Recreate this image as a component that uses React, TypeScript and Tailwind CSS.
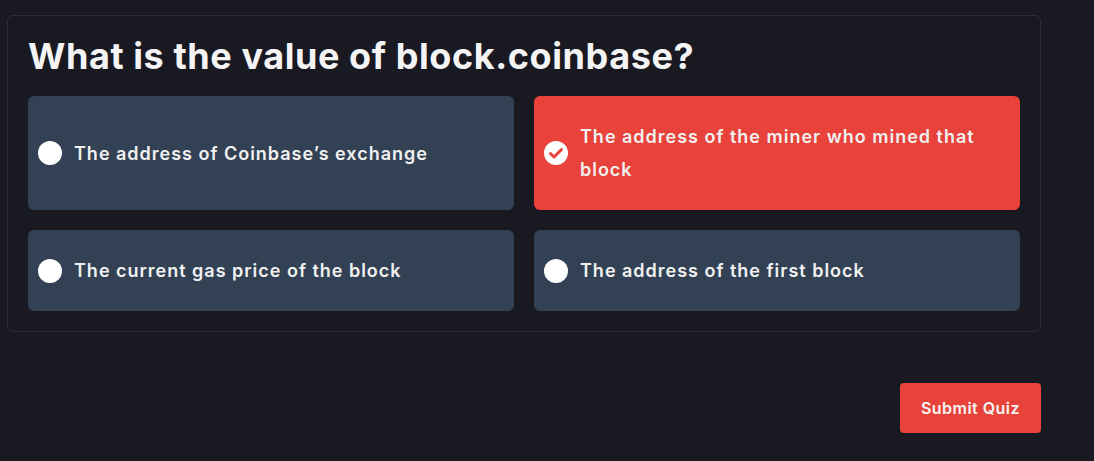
const options = [
	{ id: 1, text: 'The address of Coinbase’s exchange', selected: false },
	{ id: 2, text: 'The address of the miner who mined that block', selected: true },
	{ id: 3, text: 'The current gas price of the block', selected: false },
	{ id: 4, text: 'The address of the first block', selected: false },
]

function CheckDot() {
	return (
		<svg width="24" height="24" viewBox="0 0 24 24" className="shrink-0">
			<circle cx="12" cy="12" r="12" fill="#ffffff" />
			<path d="M6.5 12.5l3.5 3.5 7.5-7.5" fill="none" stroke="#e8433a" strokeWidth="3" strokeLinecap="round" strokeLinejoin="round" />
		</svg>
	)
}

export default function App() {
	return (
		<div className="min-h-screen bg-[#191922] pt-[15px] pl-[7px] font-['Inter',sans-serif]">
			<div className="w-[1034px]">
				<div className="rounded-md border border-[#2c2c35] px-5 pt-5 pb-5">
					<h2 className="text-[36px] leading-10 font-bold tracking-[0.016em] text-[#f4f4f5]">
						What is the value of block.coinbase?
					</h2>
					<div className="mt-5 grid grid-cols-2 gap-5">
						{options.map((o) => (
							<button
								key={o.id}
								className={
									'flex items-center gap-3 rounded-md pl-[10px] pr-6 py-6 text-left ' +
									(o.selected ? 'bg-[#e8423a]' : 'bg-[#334155]')
								}
							>
								{o.selected ? (
									<CheckDot />
								) : (
									<span className="h-6 w-6 shrink-0 rounded-full bg-white" />
								)}
								<span className="text-[18px] leading-[33px] font-semibold tracking-[0.055em] text-[#f1f1f1]">{o.text}</span>
							</button>
						))}
					</div>
				</div>
				<div className="mt-[51px] flex justify-end">
					<button className="h-[50px] w-[141px] rounded bg-[#e8433a] text-base font-semibold tracking-[0.03em] text-[#f5f5f5]">
						Submit Quiz
					</button>
				</div>
			</div>
		</div>
	)
}
